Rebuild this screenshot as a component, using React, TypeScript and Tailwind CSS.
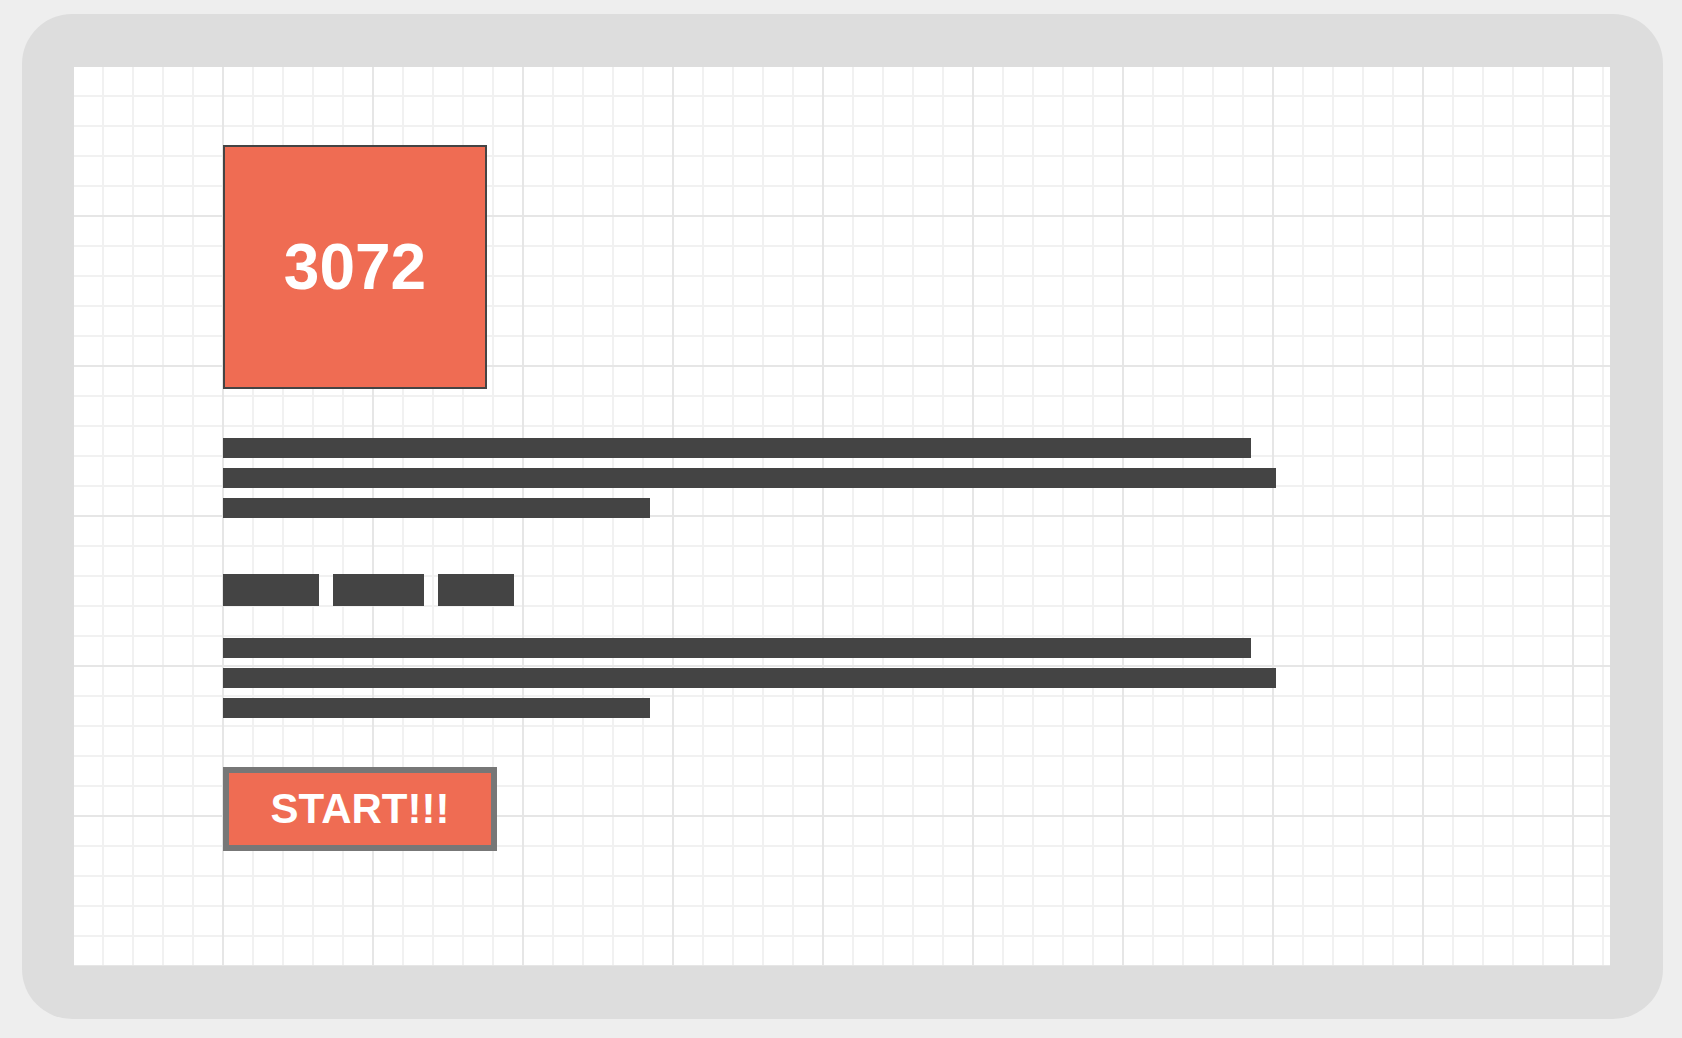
export default function App() {
  const para = (
    <div className="flex flex-col gap-[10px]">
      <div className="h-[20px] w-[1028px] bg-[#444444]" />
      <div className="h-[20px] w-[1053px] bg-[#444444]" />
      <div className="h-[20px] w-[427px] bg-[#444444]" />
    </div>
  );

  return (
    <div className="h-[1038px] w-full bg-[#eeeeee] pt-[14px] pl-[22px] pr-[19px] pb-[19px] font-['Liberation_Sans',Arial,sans-serif]">
      <div className="h-full rounded-[50px] bg-[#dddddd] pt-[53px] pl-[52px] pr-[53px] pb-[53px]">
        <div className="h-full bg-white pl-[149px] pt-[78px] [background-image:linear-gradient(to_right,#e6e6e6_2px,transparent_2px),linear-gradient(to_bottom,#e6e6e6_2px,transparent_2px),linear-gradient(to_right,#f1f1f1_2px,transparent_2px),linear-gradient(to_bottom,#f1f1f1_2px,transparent_2px)] [background-size:150px_150px,150px_150px,30px_30px,30px_30px] [background-position:148px_148px,148px_148px,28px_28px,28px_28px]">
          {/* score tile */}
          <div className="flex h-[244px] w-[264px] items-center justify-center border-2 border-[#444444] bg-[#ef6c53] text-[64px] font-bold leading-none text-white">
            3072
          </div>

          <div className="mt-[49px]">{para}</div>

          <div className="mt-[56px] flex gap-[14px]">
            <div className="h-[32px] w-[96px] bg-[#444444]" />
            <div className="h-[32px] w-[91px] bg-[#444444]" />
            <div className="h-[32px] w-[76px] bg-[#444444]" />
          </div>

          <div className="mt-[32px]">{para}</div>

          <button className="mt-[49px] flex h-[84px] w-[274px] items-center justify-center border-[6px] border-[#777777] bg-[#ef6c53] text-[42px] font-bold leading-none text-white">
            START!!!
          </button>
        </div>
      </div>
    </div>
  );
}
